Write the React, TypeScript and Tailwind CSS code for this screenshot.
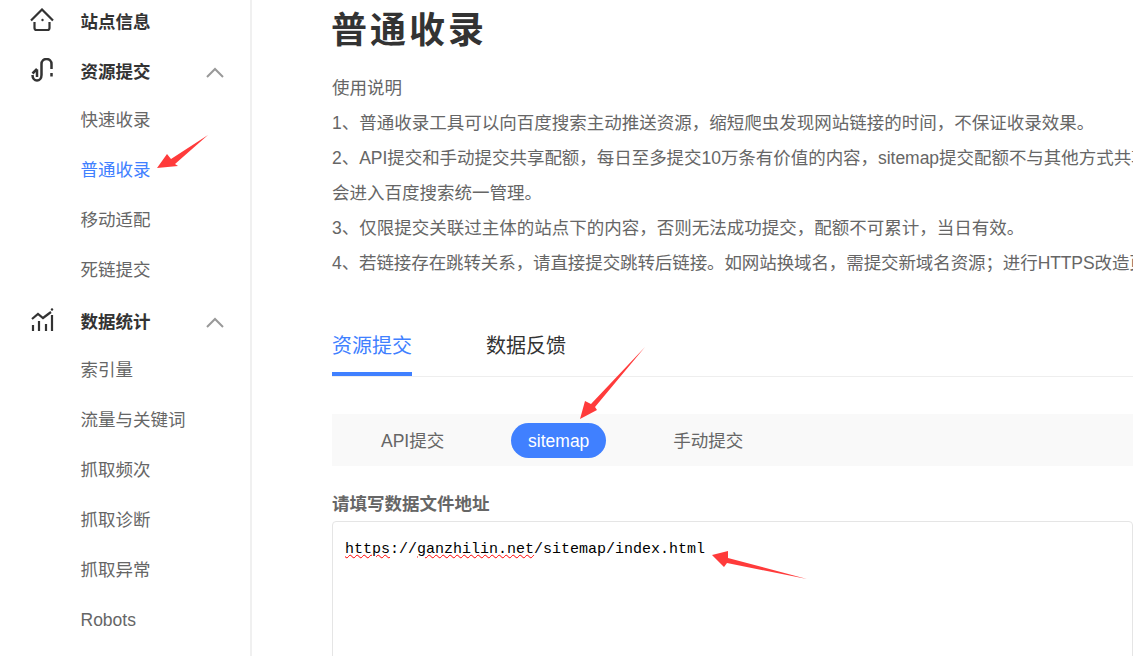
import React from 'react';

const HomeIcon = () => (
  <svg width="24" height="28" viewBox="0 0 24 28" fill="none" stroke="#333" strokeWidth="2.2">
    <path d="M1 12.5 12 1.5l11 11" />
    <path d="M4.5 14v6q0 2 2 2h11q2 0 2-2v-6" />
    <circle cx="12.5" cy="12" r="1.2" fill="#333" stroke="none" />
  </svg>
);

const SubmitIcon = () => (
  <svg width="24" height="28" viewBox="0 0 24 28" fill="none" stroke="#333" strokeWidth="2.5">
    <path d="M11.5 17V6a5 5 0 0 1 10 0v5" />
    <path d="M21.5 15v3.5" />
    <path d="M11.5 17a4.5 5.5 0 0 1-9 0" />
    <path d="M2.5 15.5 7 11" />
    <path d="M7 11.5V19" />
  </svg>
);

const ChartIcon = () => (
  <svg width="24" height="28" viewBox="0 0 24 28" fill="none" stroke="#333" strokeWidth="2.2">
    <path d="M2 11l6-5 5 4 8-6" />
    <path d="M3 17v6M9 13v10M16 16v7M22 7v16" />
    <circle cx="22" cy="1.5" r="1.2" fill="#333" stroke="none" />
  </svg>
);

const Chevron = () => (
  <svg width="20" height="12" viewBox="0 0 20 12" fill="none" stroke="#999" strokeWidth="2">
    <path d="M2 11 10 3l8 8" />
  </svg>
);

function GroupRow({ icon, label, open }: { icon: React.ReactNode; label: string; open?: boolean }) {
  return (
    <div className="flex h-[50px] items-center pl-[30px] pr-[25px]">
      <div className="w-[50.5px] shrink-0">{icon}</div>
      <span className="flex-1 font-bold text-[#333]">{label}</span>
      {open && <Chevron />}
    </div>
  );
}

function SubRow({ label, active }: { label: string; active?: boolean }) {
  return (
    <div className={`flex h-[50px] items-center pb-[4px] pl-[80.5px] ${active ? 'text-[#4080ff]' : 'text-[#666]'}`}>
      {label}
    </div>
  );
}

function Sidebar() {
  return (
    <aside className="w-[252px] shrink-0 -mt-[3px] border-r-2 border-[#f0f0f0]">
      <GroupRow icon={<HomeIcon />} label="站点信息" />
      <GroupRow icon={<SubmitIcon />} label="资源提交" open />
      <SubRow label="快速收录" />
      <SubRow label="普通收录" active />
      <SubRow label="移动适配" />
      <SubRow label="死链提交" />
      <GroupRow icon={<ChartIcon />} label="数据统计" open />
      <SubRow label="索引量" />
      <SubRow label="流量与关键词" />
      <SubRow label="抓取频次" />
      <SubRow label="抓取诊断" />
      <SubRow label="抓取异常" />
      <SubRow label="Robots" />
    </aside>
  );
}

const notes = [
  { text: '使用说明', cls: '' },
  { text: '1、普通收录工具可以向百度搜索主动推送资源，缩短爬虫发现网站链接的时间，不保证收录效果。', cls: '' },
  { text: '2、API提交和手动提交共享配额，每日至多提交10万条有价值的内容，sitemap提交配额不与其他方式共享', cls: 'tracking-[-0.04px]' },
  { text: '会进入百度搜索统一管理。', cls: '' },
  { text: '3、仅限提交关联过主体的站点下的内容，否则无法成功提交，配额不可累计，当日有效。', cls: '' },
  { text: '4、若链接存在跳转关系，请直接提交跳转后链接。如网站换域名，需提交新域名资源；进行HTTPS改造页', cls: 'tracking-[-0.1px]' },
];

function Main() {
  return (
    <main className="min-w-0 flex-1 pl-[80px]">
      <h1 className="-ml-px h-[71px] pt-[7px] text-[36px] leading-[48px] font-bold tracking-[3px] text-[#333]">普通收录</h1>
      <div className="whitespace-nowrap leading-[35px] text-[#666]">
        {notes.map((line) => (
          <p key={line.text} className={line.cls}>
            {line.text}
          </p>
        ))}
      </div>
      <div className="mt-[33px] flex h-[63px] border-b border-[#eee] text-[20px] leading-[64px]">
        <div className="h-[62px] w-[80px] border-b-4 border-[#4080ff] text-[#4080ff]">资源提交</div>
        <div className="ml-[74px] text-[#333]">数据反馈</div>
      </div>
      <div className="mt-[37px] flex h-[52px] items-center bg-[#f9f9f9] text-[#666]">
        <span className="ml-[49px] pt-[2px]">API提交</span>
        <span className="ml-[67px] flex h-[35px] w-[95px] items-center justify-center rounded-full bg-[#4080ff] pt-[2px] text-white">
          sitemap
        </span>
        <span className="ml-[67px] pt-[2px]">手动提交</span>
      </div>
      <div className="mt-[26px] h-[24px] leading-[24px] font-bold text-[#666]">请填写数据文件地址</div>
      <div className="mt-[5px] h-[200px] rounded-t border border-[#e5e5e5] pl-[12px] pt-[18px] font-['Liberation_Mono',monospace] text-[15px] leading-[20px] text-black">
        <span className="underline decoration-wavy decoration-[#f00] decoration-1">https</span>://
        <span className="underline decoration-wavy decoration-[#f00] decoration-1">ganzhilin.net</span>/sitemap/index.html
      </div>
    </main>
  );
}

// red annotation arrows drawn on top of the screenshot
const Arrows = () => (
  <svg className="pointer-events-none absolute left-0 top-0" width="1133" height="656" fill="#ff3b3b">
    <polygon points="157,168 167,154 171,159 208,135 175,164 178,166" />
    <polygon points="580,419 585,401 591,404 645,347 595,407 597,410" />
    <polygon points="712,555 728,551 728,558 807,579 727,563 724,567" />
  </svg>
);

export default function App() {
  return (
    <div className="relative flex h-[656px] w-[1133px] overflow-hidden bg-white font-['Liberation_Sans','Noto_Sans_CJK_SC',sans-serif] text-[17.5px]">
      <Sidebar />
      <Main />
      <Arrows />
    </div>
  );
}
